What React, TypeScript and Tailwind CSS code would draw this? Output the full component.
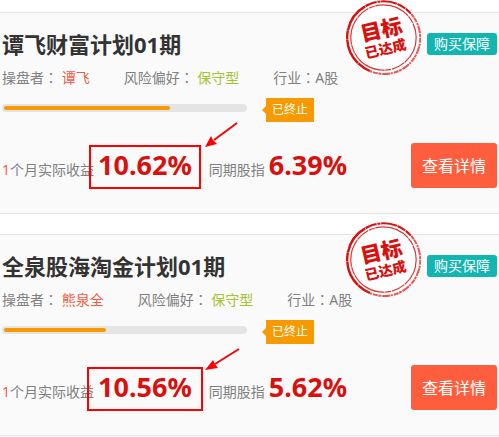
import React from "react";

const plans = [
  {
    title: "谭飞财富计划01期",
    trader: "谭飞",
    risk: "保守型",
    industry: "A股",
    progress: 69,
    profit: "10.62%",
    index: "6.39%",
    box: "-inset-x-[9px] top-0 h-11",
    arrow: { line: "M45 2 L22 19", head: "M13 26 L19 15 L21 19 L25 23 Z" },
  },
  {
    title: "全泉股海淘金计划01期",
    trader: "熊泉全",
    risk: "保守型",
    industry: "A股",
    progress: 42.5,
    profit: "10.56%",
    index: "5.62%",
    box: "-inset-x-[11px] top-0 h-11",
    arrow: { line: "M47 6 L23 21", head: "M13 27 L21 17 L23 21 L26 25 Z" },
  },
];

const Stamp = () => {
  return (
    <svg
      className="absolute right-[78px] -top-[13px] h-[75px] w-[75px]"
      viewBox="0 0 75 75"
      role="img"
      aria-label="目标已达成"
    >
      <circle cx="37.5" cy="37.5" r="36.5" fill="#fff" />
      <g fill="none" stroke="#d8110f">
        {/* heavy left side, worn right side */}
        <path
          d="M24 71 A36 36 0 0 1 24 4"
          strokeWidth="2.4"
          strokeDasharray="14 0.4 26 0.5 9 0.4 30 0.5"
        />
        <path
          d="M24 4 A36 36 0 0 1 66 15"
          strokeWidth="2"
          strokeDasharray="7 0.8 3 0.6 16 0.6 9 0.6"
        />
        <path
          d="M66 15 A36 36 0 0 1 24 71"
          strokeWidth="2"
          strokeDasharray="3 0.6 5 1 2 0.6 8 0.8"
          opacity="0.7"
        />
        <circle
          cx="37.5"
          cy="37.5"
          r="32.7"
          strokeWidth="1.2"
          strokeDasharray="28 0.6 14 1 6 0.6 36 0.6 8 0.6"
          opacity="0.85"
        />
      </g>
      <g
        transform="rotate(-13 37.5 37.5)"
        fill="#d8110f"
        textAnchor="middle"
        className="font-['Noto_Sans_CJK_SC',sans-serif] font-black"
      >
        <text x="37" y="37" fontSize="21">
          目标
        </text>
        <text x="37" y="54" fontSize="14">
          已达成
        </text>
      </g>
    </svg>
  );
};

// the TC face centres the full-width colon in its cell
const Colon = () => <span className="font-['Noto_Sans_CJK_TC',sans-serif]">：</span>;

const App = () => {
  return (
    <div className="flex flex-col gap-5 bg-white pt-3 font-['Noto_Sans','Noto_Sans_CJK_SC',sans-serif] text-sm text-[#808080]">
      {plans.map((plan) => {
        return (
          <section
            key={plan.title}
            className="relative border-y border-[#e4e4e4] bg-[#fafafa] px-0.5 pt-4 pb-[25px]"
          >
            <div className="flex h-[30px] items-center justify-between">
              <h2 className="text-[22px] leading-[30px] font-bold whitespace-nowrap text-[#333]">
                {plan.title}
              </h2>
              <a
                href="#"
                className="rounded-[3px] bg-[#13b5b1] px-[7px] leading-[22px] text-white"
              >
                购买保障
              </a>
            </div>
            <Stamp />

            <div className="mt-2 flex h-5 gap-[34px] leading-5 whitespace-nowrap">
              <p>
                操盘者
                <Colon />{" "}
                <a href="#" className="text-[#f15a43]">
                  {plan.trader}
                </a>
              </p>
              <p>
                风险偏好
                <Colon /> <span className="text-[#a5c32f]">{plan.risk}</span>
              </p>
              <p>
                行业
                <Colon />
                {plan.industry}
              </p>
            </div>

            <div className="mt-[11px] flex h-6 items-start">
              <div className="mt-1.5 h-2 w-[245px] rounded-full bg-[#e4e4e4] p-0.5">
                <div
                  className="h-1 rounded-full bg-[#f79900]"
                  style={{ width: `${plan.progress}%` }}
                />
              </div>
              <span className="ml-[15px] self-center border-y-4 border-r-4 border-transparent border-r-[#f79900]" />
              <span className="bg-[#f79900] px-1.5 text-xs leading-6 text-white">
                已终止
              </span>
            </div>

            <div className="mt-[21px] flex h-[45px] items-center justify-between">
              <div className="flex items-baseline pb-0.5 whitespace-nowrap">
                <span>
                  <span className="text-[#f15a43]">1</span>个月实际收益
                </span>
                <strong className="relative ml-1 text-[27px] leading-10 text-[#d8110f]">
                  {plan.profit}
                  <span
                    className={`absolute border-2 border-[#f00] ${plan.box}`}
                  />
                  <svg
                    className="absolute -top-6 left-full h-8 w-12"
                    viewBox="0 0 48 32"
                    aria-hidden="true"
                  >
                    <path d={plan.arrow.line} stroke="#f00" strokeWidth="2" />
                    <path d={plan.arrow.head} fill="#f00" />
                  </svg>
                </strong>
                <span className="ml-[17px]">同期股指</span>
                <strong className="ml-1 text-[27px] leading-10 text-[#d8110f]">
                  {plan.index}
                </strong>
              </div>
              <button className="h-[45px] rounded-[3px] bg-[#ff5e3e] px-[11px] text-base text-white">
                查看详情
              </button>
            </div>
          </section>
        );
      })}
    </div>
  );
};
export default App;
